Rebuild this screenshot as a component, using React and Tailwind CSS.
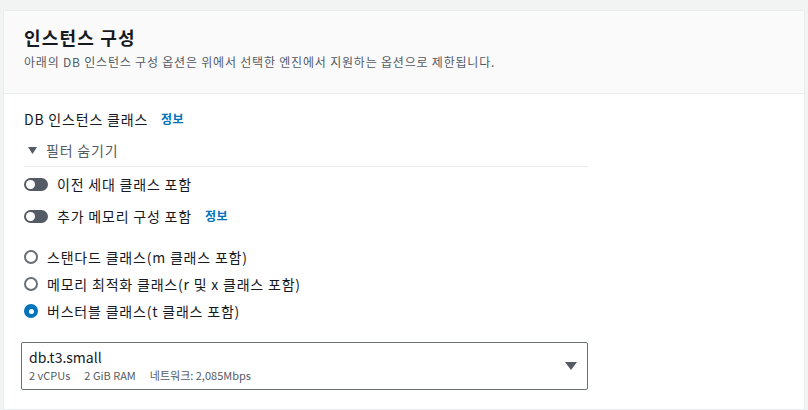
const FONT = "font-['Noto_Sans_CJK_KR','Noto_Sans',sans-serif]"

function Toggle() {
  return (
    <span className="inline-flex h-[13px] w-[24px] shrink-0 items-center rounded-full bg-[#545b64]">
      <span className="ml-[2px] h-[9px] w-[9px] rounded-full bg-white"></span>
    </span>
  )
}

function Radio({ checked }) {
  if (checked) {
    return (
      <span className="flex h-[14px] w-[14px] shrink-0 items-center justify-center rounded-full bg-[#0073bb]">
        <span className="h-[5px] w-[5px] rounded-full bg-white"></span>
      </span>
    )
  }
  return <span className="h-[14px] w-[14px] shrink-0 rounded-full border-2 border-[#687078] bg-white"></span>
}

const RADIOS = [
  { label: '스탠다드 클래스(m 클래스 포함)', checked: false },
  { label: '메모리 최적화 클래스(r 및 x 클래스 포함)', checked: false },
  { label: '버스터블 클래스(t 클래스 포함)', checked: true },
]

export default function App() {
  return (
    <div className={`min-h-screen bg-[#f2f3f3] pt-[10px] text-[#16191f] ${FONT}`}>
      <div className="ml-[3px] w-[802px] min-h-[400px] border border-[#eaeded] bg-white">
        {/* header */}
        <div className="border-b border-[#eaeded] bg-[#fafafa] px-[20px] pt-[15px] pb-[22px]">
          <h2 className="text-[18px] font-bold leading-[22px] tracking-[1.2px]">인스턴스 구성</h2>
          <p className="mt-[5px] text-[12px] leading-[18px] tracking-[0.8px] text-[#545b64]">
            아래의 DB 인스턴스 구성 옵션은 위에서 선택한 엔진에서 지원하는 옵션으로 제한됩니다.
          </p>
        </div>

        {/* body */}
        <div className="px-[20px] pt-[14px]">
          <div className="flex items-center gap-[13px] text-[14px] leading-[22px]">
            <span className="tracking-[0.8px]">DB 인스턴스 클래스</span>
            <span className="text-[12px] font-bold tracking-[0.5px] text-[#0073bb]">정보</span>
          </div>

          <div className="mt-[4px] w-[564px] border-b border-[#eaeded]">
            <div className="flex items-center gap-[9px] py-[5px] text-[14px] leading-[22px] text-[#545b64]">
              <svg className="ml-[4px]" width="9" height="7" viewBox="0 0 9 7">
                <path d="M0 0 H9 L4.5 7 Z" fill="#545b64" />
              </svg>
              <span className="tracking-[0.8px]">필터 숨기기</span>
            </div>
          </div>

          <div className="mt-[6px] flex flex-col gap-[10px]">
            <div className="flex items-center gap-[9px] text-[14px] leading-[22px]">
              <Toggle />
              <span className="tracking-[0.8px]">이전 세대 클래스 포함</span>
            </div>
            <div className="flex items-center gap-[9px] text-[14px] leading-[22px]">
              <Toggle />
              <span className="tracking-[0.8px]">추가 메모리 구성 포함</span>
              <span className="ml-[4px] text-[12px] font-bold tracking-[0.5px] text-[#0073bb]">정보</span>
            </div>
          </div>

          <div className="mt-[19px] flex flex-col gap-[5px]">
            {RADIOS.map((r) => (
              <div key={r.label} className="flex items-center gap-[9px] text-[14px] leading-[22px]">
                <Radio checked={r.checked} />
                <span className="tracking-[0.8px]">{r.label}</span>
              </div>
            ))}
          </div>

          <div className="mt-[20px] -ml-[3px] flex h-[48px] w-[567px] items-center justify-between rounded-[2px] border border-[#687078] pl-[7px] pr-[10px]">
            <div className="flex flex-col">
              <span className="text-[14px] leading-[18px]">db.t3.small</span>
              <span className="flex gap-[14px] text-[11px] leading-[18px] text-[#545b64]">
                <span>2 vCPUs</span>
                <span>2 GiB RAM</span>
                <span>네트워크: 2,085Mbps</span>
              </span>
            </div>
            <svg width="12" height="10" viewBox="0 0 12 10">
              <path d="M0 1 H12 L6 9 Z" fill="#545b64" />
            </svg>
          </div>
        </div>
      </div>
    </div>
  )
}
